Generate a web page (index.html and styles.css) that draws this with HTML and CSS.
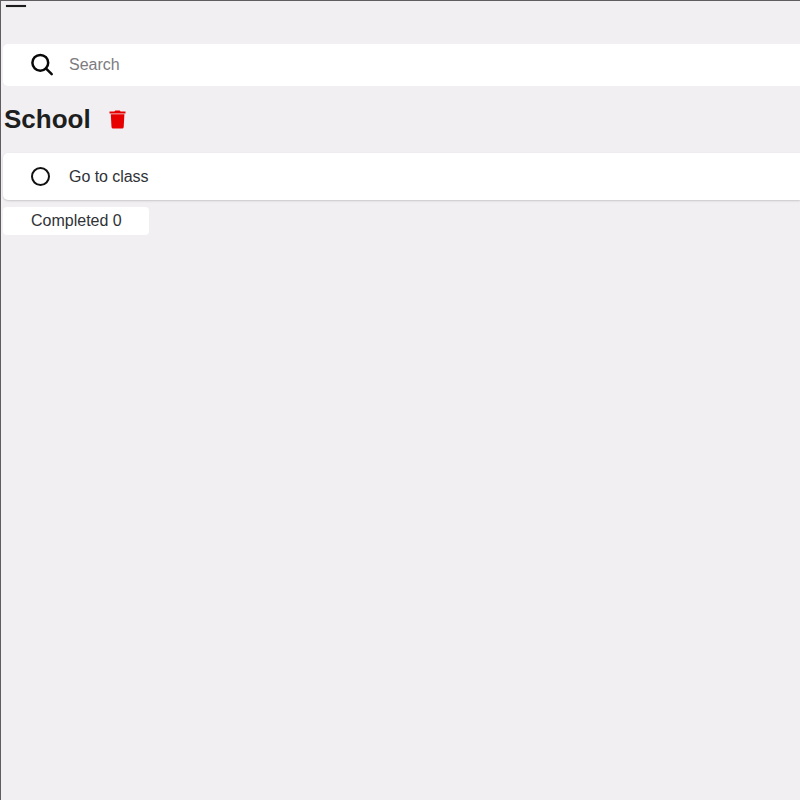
FILE: index.html
```html
<!DOCTYPE html>
<html lang="en">
<head>
<meta charset="utf-8">
<title>School</title>
<link rel="stylesheet" href="styles.css">
</head>
<body>
<main class="app">
  <header class="topbar"><span class="menu-bar"></span></header>
  <label class="search">
    <svg class="search-icon" viewBox="0 0 24 24"><circle cx="10.3" cy="9.8" r="7.9"/><path d="M15.9 15.4l5.8 5.8"/></svg>
    <input class="search-input" type="text" placeholder="Search">
  </label>
  <div class="heading">
    <h1 class="title">School</h1>
    <svg class="trash" viewBox="0 0 18 20"><path d="M.5 1.4h4.9L6.3.5h4.4l.9.9h4.9v2H.5zM1.8 4.3h13.6l-.7 12.7q-.1 1.5-1.6 1.5H4.1q-1.5 0-1.6-1.5z"/></svg>
  </div>
  <div class="task">
    <span class="check"></span>
    <span class="task-name">Go to class</span>
  </div>
  <div class="completed">Completed 0</div>
</main>
</body>
</html>
```
FILE: styles.css
```css
* { box-sizing: border-box; }
body {
  margin: 0;
  background: #f1eff2;
  font: 16px/20px "Liberation Sans", Arial, sans-serif;
  color: #303236;
}
.app {
  height: 100vh;
  overflow: hidden;
  padding-left: 2px;
  border-left: 1px solid #5f5d60;
  border-top: 1px solid #5f5d60;
}
.topbar { height: 43px; padding: 4px 0 0 3px; }
.menu-bar {
  display: block;
  width: 20px;
  height: 2px;
  background: #1c1c1c;
  box-shadow: 0 0 1px #777;
}
.search, .task {
  display: flex;
  align-items: center;
  background: #fff;
  border-radius: 5px 0 0 5px;
}
.search { height: 42px; padding-left: 27px; }
.search-icon {
  width: 24px;
  height: 24px;
  fill: none;
  stroke: #080808;
  stroke-width: 2.5;
  stroke-linecap: round;
}
.search-input {
  flex: 1;
  margin-left: 15px;
  padding: 0;
  border: 0;
  outline: 0;
  background: none;
  font: inherit;
}
.search-input::placeholder { color: #7d7b80; opacity: 1; }
.heading { display: flex; align-items: center; height: 67px; padding-left: 1px; }
.title {
  margin: 0;
  padding-bottom: 2px;
  font-size: 26px;
  line-height: 30px;
  font-weight: 700;
  color: #1d1e20;
}
.trash { width: 18px; height: 20px; margin-left: 18px; fill: #e60000; }
.task {
  height: 47px;
  padding-left: 28px;
  box-shadow: 0 1px 2px #c9c7ca;
}
.check { width: 19px; height: 19px; border: 2px solid #111; border-radius: 50%; }
.task-name { margin-left: 19px; letter-spacing: -0.05px; }
.completed {
  width: 146px;
  height: 28px;
  margin-top: 7px;
  padding-left: 28px;
  line-height: 27px;
  background: #fff;
  border-radius: 4px;
}
```
